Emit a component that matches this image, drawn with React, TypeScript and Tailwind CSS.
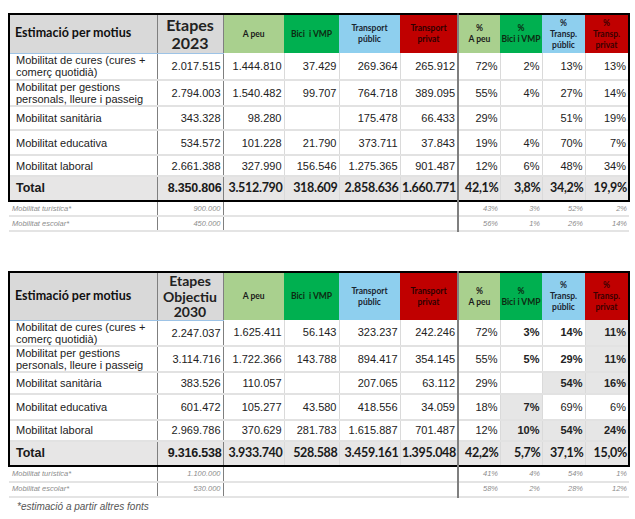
import React from "react";

type Row = {
  label: string;
  h: number;
  vals: string[];
  pcts: string[];
  bold?: number[];
  shade?: number[];
};

type TableData = {
  etapes: string[];
  headH: number;
  rows: Row[];
  total: { h: number; vals: string[]; pcts: string[] };
  extra: { h: number; label: string; val: string; pcts: string[] }[];
};

const widths = ["w-[148px]", "w-[66px]", "w-[61px]", "w-[55px]", "w-[61px]", "w-[58px]", "w-[42px]", "w-[42px]", "w-[43px]", "w-[44px]"];

const arial = "font-['Liberation_Sans',Arial,sans-serif]";
const calibri = "font-['Lato','Open_Sans',sans-serif]";

const t2023: TableData = {
  etapes: ["Etapes", "2023"],
  headH: 39,
  rows: [
    { label: "Mobilitat de cures (cures + comerç quotidià)", h: 27, vals: ["2.017.515", "1.444.810", "37.429", "269.364", "265.912"], pcts: ["72%", "2%", "13%", "13%"] },
    { label: "Mobilitat per gestions personals, lleure i passeig", h: 23, vals: ["2.794.003", "1.540.482", "99.707", "764.718", "389.095"], pcts: ["55%", "4%", "27%", "14%"] },
    { label: "Mobilitat sanitària", h: 24, vals: ["343.328", "98.280", "", "175.478", "66.433"], pcts: ["29%", "", "51%", "19%"] },
    { label: "Mobilitat educativa", h: 25, vals: ["534.572", "101.228", "21.790", "373.711", "37.843"], pcts: ["19%", "4%", "70%", "7%"] },
    { label: "Mobilitat laboral", h: 21, vals: ["2.661.388", "327.990", "156.546", "1.275.365", "901.487"], pcts: ["12%", "6%", "48%", "34%"] },
  ],
  total: { h: 25, vals: ["8.350.806", "3.512.790", "318.609", "2.858.636", "1.660.771"], pcts: ["42,1%", "3,8%", "34,2%", "19,9%"] },
  extra: [
    { h: 15, label: "Mobilitat turística*", val: "900.000", pcts: ["43%", "3%", "52%", "2%"] },
    { h: 15, label: "Mobilitat escolar*", val: "450.000", pcts: ["56%", "1%", "26%", "14%"] },
  ],
};

const t2030: TableData = {
  etapes: ["Etapes", "Objectiu", "2030"],
  headH: 47,
  rows: [
    { label: "Mobilitat de cures (cures + comerç quotidià)", h: 25, vals: ["2.247.037", "1.625.411", "56.143", "323.237", "242.246"], pcts: ["72%", "3%", "14%", "11%"], bold: [1, 2, 3], shade: [3] },
    { label: "Mobilitat per gestions personals, lleure i passeig", h: 26, vals: ["3.114.716", "1.722.366", "143.788", "894.417", "354.145"], pcts: ["55%", "5%", "29%", "11%"], bold: [1, 2, 3], shade: [3] },
    { label: "Mobilitat sanitària", h: 22, vals: ["383.526", "110.057", "", "207.065", "63.112"], pcts: ["29%", "", "54%", "16%"], bold: [2, 3], shade: [2, 3] },
    { label: "Mobilitat educativa", h: 26, vals: ["601.472", "105.277", "43.580", "418.556", "34.059"], pcts: ["18%", "7%", "69%", "6%"], bold: [1], shade: [1] },
    { label: "Mobilitat laboral", h: 21, vals: ["2.969.786", "370.629", "281.783", "1.615.887", "701.487"], pcts: ["12%", "10%", "54%", "24%"], bold: [1, 2, 3], shade: [1, 2, 3] },
  ],
  total: { h: 25, vals: ["9.316.538", "3.933.740", "528.588", "3.459.161", "1.395.048"], pcts: ["42,2%", "5,7%", "37,1%", "15,0%"] },
  extra: [
    { h: 16, label: "Mobilitat turística*", val: "1.100.000", pcts: ["41%", "4%", "54%", "1%"] },
    { h: 15, label: "Mobilitat escolar*", val: "530.000", pcts: ["58%", "2%", "28%", "12%"] },
  ],
};

// separador vertical segons columna
function sep(i: number, main: boolean) {
  if (i === 0 || i === 1) return "border-r border-r-[#7f7f7f]";
  if (i === 5) return "border-r-2 border-r-[#7f7f7f]";
  if (i === 9) return main ? "border-r-2 border-r-black" : "border-r-0";
  return "border-r border-r-[#dadada]";
}

const heads = [
  { lines: ["A peu"], bg: "bg-[#a9d08e]", fg: "text-[#1a1a1a]" },
  { lines: ["Bici  i VMP"], bg: "bg-[#00b050]", fg: "text-[#0d2b12]" },
  { lines: ["Transport", "públic"], bg: "bg-[#8ecfee]", fg: "text-[#1a2630]" },
  { lines: ["Transport", "privat"], bg: "bg-[#c00000]", fg: "text-[#2e0000]" },
  { lines: ["%", "A peu"], bg: "bg-[#a9d08e]", fg: "text-[#1a1a1a]" },
  { lines: ["%", "Bici i VMP"], bg: "bg-[#00b050]", fg: "text-[#0d2b12]" },
  { lines: ["%", "Transp.", "públic"], bg: "bg-[#8ecfee]", fg: "text-[#1a2630]" },
  { lines: ["%", "Transp.", "privat"], bg: "bg-[#c00000]", fg: "text-[#3a0000]" },
];

function DataTable({ d }: { d: TableData }) {
  const big = d.etapes.length > 2;
  return (
    <table className="w-[620px] table-fixed border-collapse">
      <colgroup>
        {widths.map((w, i) => (
          <col key={i} className={w} />
        ))}
      </colgroup>
      <tbody>
        <tr style={{ height: d.headH }} className="border-t-2 border-t-black">
          <td className={`border-l-2 border-l-black bg-[#d9d9d9] p-0 pl-[5px] text-[12.5px] font-bold text-[#111] ${calibri} ${sep(0, true)} border-b border-b-[#9dc3e6]`}>
            Estimació per motius
          </td>
          <td className={`bg-[#d9d9d9] p-0 text-center font-bold text-[#222] ${big ? "text-[14px] leading-[15.5px]" : "text-[16px] leading-[18px]"} ${calibri} ${sep(1, true)} border-b border-b-[#9dc3e6]`}>
            {d.etapes.map((l) => (
              <div key={l}>{l}</div>
            ))}
          </td>
          {heads.map((h, i) => (
            <td
              key={i}
              className={`${h.bg} ${h.fg} p-0 text-center text-[8.5px] leading-[11px] font-bold ${calibri} ${i === 3 ? "border-r-2 border-r-[#7f7f7f]" : i === 7 ? "border-r-2 border-r-black" : ""}`}
            >
              {h.lines.map((l) => (
                <div key={l} className="whitespace-pre">{l}</div>
              ))}
            </td>
          ))}
        </tr>
        {d.rows.map((r) => (
          <tr key={r.label} style={{ height: r.h }} className={`border-b-2 border-b-[#e2e2e2] text-[11px] leading-[12px] text-[#222] ${arial}`}>
            <td className={`border-l-2 border-l-black p-0 pl-[6px] ${sep(0, true)}`}>{r.label}</td>
            {r.vals.map((v, i) => (
              <td key={i} className={`p-0 pr-[2px] text-right ${sep(i + 1, true)}`}>
                {v}
              </td>
            ))}
            {r.pcts.map((p, i) => (
              <td
                key={i}
                className={`p-0 pr-[2px] text-right ${sep(i + 6, true)} ${r.bold?.includes(i) ? "font-bold" : ""} ${r.shade?.includes(i) ? "bg-[#e6e6e6]" : ""}`}
              >
                {p}
              </td>
            ))}
          </tr>
        ))}
        <tr style={{ height: d.total.h }} className="border-b-2 border-b-black bg-[#e7e6e6] font-bold text-[#1a1a1a]">
          <td className={`border-l-2 border-l-black p-0 pl-[6px] text-[12.5px] ${arial} ${sep(0, true)}`}>Total</td>
          {d.total.vals.map((v, i) => (
            <td key={i} className={`p-0 pr-[1px] text-right whitespace-nowrap ${i === 0 ? `text-[12.5px] tracking-[-0.2px] ${arial}` : `text-[12.5px] tracking-[-0.3px] ${calibri}`} ${sep(i + 1, true)}`}>
              {v}
            </td>
          ))}
          {d.total.pcts.map((p, i) => (
            <td key={i} className={`p-0 pr-[1px] text-right whitespace-nowrap text-[12.5px] tracking-[-0.3px] ${calibri} ${sep(i + 6, true)}`}>
              {p}
            </td>
          ))}
        </tr>
        {d.extra.map((e) => (
          <tr key={e.label} style={{ height: e.h }} className={`border-b-2 border-b-[#e4e4e4] text-[7.5px] text-[#8c8c8c] italic ${arial}`}>
            <td className={`p-0 pl-[3px] ${sep(0, false)}`}>{e.label}</td>
            <td className={`p-0 pr-[2px] text-right ${sep(1, false)}`}>{e.val}</td>
            <td colSpan={4} className={`p-0 ${sep(5, false)}`} />
            {e.pcts.map((p, i) => (
              <td key={i} className="p-0 pr-[2px] text-right">
                {p}
              </td>
            ))}
          </tr>
        ))}
      </tbody>
    </table>
  );
}

export default function App() {
  return (
    <div className="h-[519px] w-[635px] overflow-hidden bg-white pl-[8px]">
      <div className="pt-[13px]">
        <DataTable d={t2023} />
      </div>
      <div className="pt-[39px]">
        <DataTable d={t2030} />
      </div>
      <p className={`pt-[3px] pl-[9px] text-[10px] leading-[12px] text-[#555] italic ${arial}`}>*estimació a partir altres fonts</p>
    </div>
  );
}
